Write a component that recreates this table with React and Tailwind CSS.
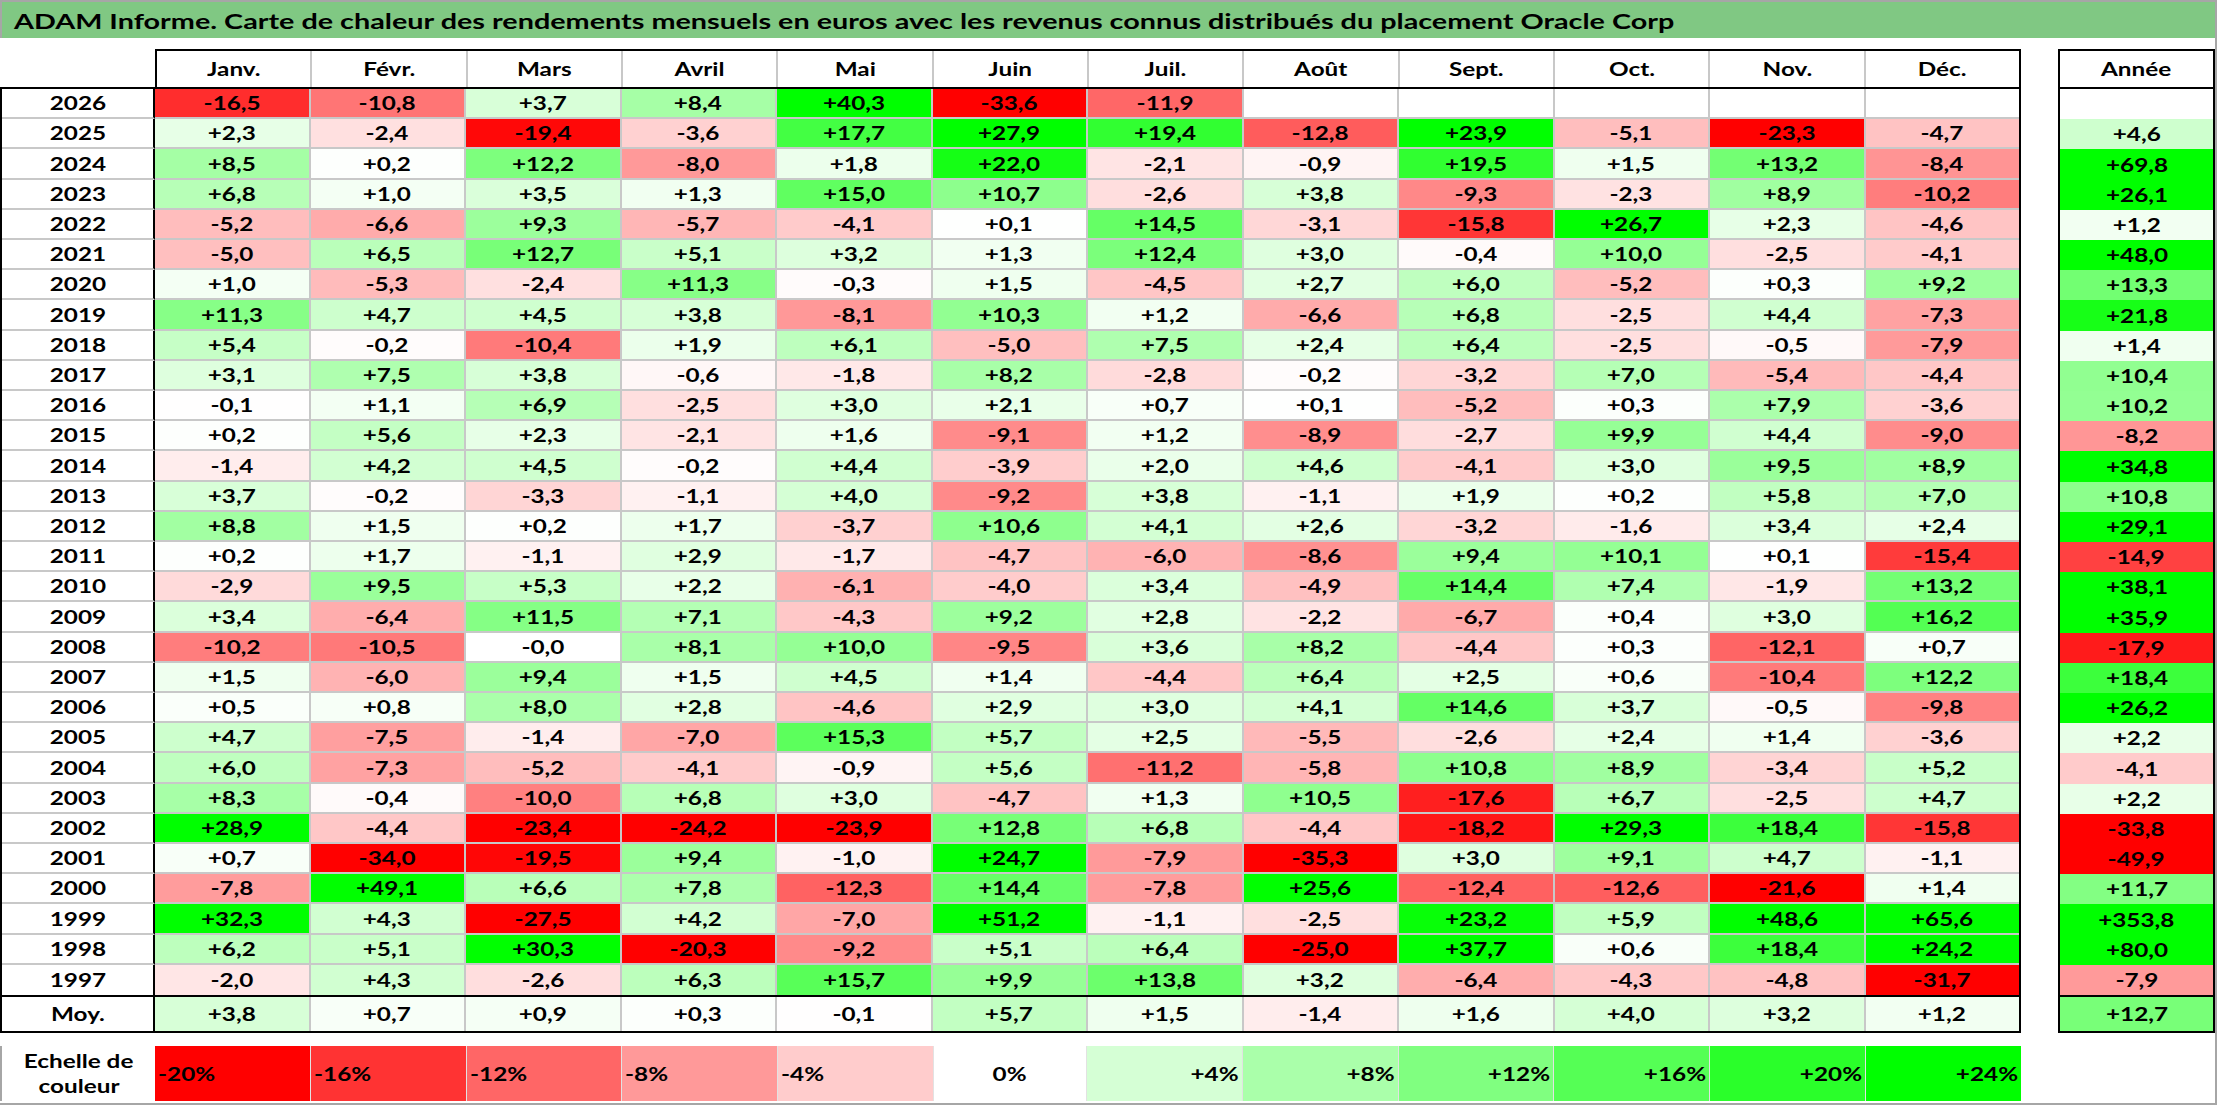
import React from "react";

const months = ["Janv.", "Févr.", "Mars", "Avril", "Mai", "Juin", "Juil.", "Août", "Sept.", "Oct.", "Nov.", "Déc."];

const raw = [
  ["2026", "-16,5 -10,8 +3,7 +8,4 +40,3 -33,6 -11,9 _ _ _ _ _", "_"],
  ["2025", "+2,3 -2,4 -19,4 -3,6 +17,7 +27,9 +19,4 -12,8 +23,9 -5,1 -23,3 -4,7", "+4,6"],
  ["2024", "+8,5 +0,2 +12,2 -8,0 +1,8 +22,0 -2,1 -0,9 +19,5 +1,5 +13,2 -8,4", "+69,8"],
  ["2023", "+6,8 +1,0 +3,5 +1,3 +15,0 +10,7 -2,6 +3,8 -9,3 -2,3 +8,9 -10,2", "+26,1"],
  ["2022", "-5,2 -6,6 +9,3 -5,7 -4,1 +0,1 +14,5 -3,1 -15,8 +26,7 +2,3 -4,6", "+1,2"],
  ["2021", "-5,0 +6,5 +12,7 +5,1 +3,2 +1,3 +12,4 +3,0 -0,4 +10,0 -2,5 -4,1", "+48,0"],
  ["2020", "+1,0 -5,3 -2,4 +11,3 -0,3 +1,5 -4,5 +2,7 +6,0 -5,2 +0,3 +9,2", "+13,3"],
  ["2019", "+11,3 +4,7 +4,5 +3,8 -8,1 +10,3 +1,2 -6,6 +6,8 -2,5 +4,4 -7,3", "+21,8"],
  ["2018", "+5,4 -0,2 -10,4 +1,9 +6,1 -5,0 +7,5 +2,4 +6,4 -2,5 -0,5 -7,9", "+1,4"],
  ["2017", "+3,1 +7,5 +3,8 -0,6 -1,8 +8,2 -2,8 -0,2 -3,2 +7,0 -5,4 -4,4", "+10,4"],
  ["2016", "-0,1 +1,1 +6,9 -2,5 +3,0 +2,1 +0,7 +0,1 -5,2 +0,3 +7,9 -3,6", "+10,2"],
  ["2015", "+0,2 +5,6 +2,3 -2,1 +1,6 -9,1 +1,2 -8,9 -2,7 +9,9 +4,4 -9,0", "-8,2"],
  ["2014", "-1,4 +4,2 +4,5 -0,2 +4,4 -3,9 +2,0 +4,6 -4,1 +3,0 +9,5 +8,9", "+34,8"],
  ["2013", "+3,7 -0,2 -3,3 -1,1 +4,0 -9,2 +3,8 -1,1 +1,9 +0,2 +5,8 +7,0", "+10,8"],
  ["2012", "+8,8 +1,5 +0,2 +1,7 -3,7 +10,6 +4,1 +2,6 -3,2 -1,6 +3,4 +2,4", "+29,1"],
  ["2011", "+0,2 +1,7 -1,1 +2,9 -1,7 -4,7 -6,0 -8,6 +9,4 +10,1 +0,1 -15,4", "-14,9"],
  ["2010", "-2,9 +9,5 +5,3 +2,2 -6,1 -4,0 +3,4 -4,9 +14,4 +7,4 -1,9 +13,2", "+38,1"],
  ["2009", "+3,4 -6,4 +11,5 +7,1 -4,3 +9,2 +2,8 -2,2 -6,7 +0,4 +3,0 +16,2", "+35,9"],
  ["2008", "-10,2 -10,5 -0,0 +8,1 +10,0 -9,5 +3,6 +8,2 -4,4 +0,3 -12,1 +0,7", "-17,9"],
  ["2007", "+1,5 -6,0 +9,4 +1,5 +4,5 +1,4 -4,4 +6,4 +2,5 +0,6 -10,4 +12,2", "+18,4"],
  ["2006", "+0,5 +0,8 +8,0 +2,8 -4,6 +2,9 +3,0 +4,1 +14,6 +3,7 -0,5 -9,8", "+26,2"],
  ["2005", "+4,7 -7,5 -1,4 -7,0 +15,3 +5,7 +2,5 -5,5 -2,6 +2,4 +1,4 -3,6", "+2,2"],
  ["2004", "+6,0 -7,3 -5,2 -4,1 -0,9 +5,6 -11,2 -5,8 +10,8 +8,9 -3,4 +5,2", "-4,1"],
  ["2003", "+8,3 -0,4 -10,0 +6,8 +3,0 -4,7 +1,3 +10,5 -17,6 +6,7 -2,5 +4,7", "+2,2"],
  ["2002", "+28,9 -4,4 -23,4 -24,2 -23,9 +12,8 +6,8 -4,4 -18,2 +29,3 +18,4 -15,8", "-33,8"],
  ["2001", "+0,7 -34,0 -19,5 +9,4 -1,0 +24,7 -7,9 -35,3 +3,0 +9,1 +4,7 -1,1", "-49,9"],
  ["2000", "-7,8 +49,1 +6,6 +7,8 -12,3 +14,4 -7,8 +25,6 -12,4 -12,6 -21,6 +1,4", "+11,7"],
  ["1999", "+32,3 +4,3 -27,5 +4,2 -7,0 +51,2 -1,1 -2,5 +23,2 +5,9 +48,6 +65,6", "+353,8"],
  ["1998", "+6,2 +5,1 +30,3 -20,3 -9,2 +5,1 +6,4 -25,0 +37,7 +0,6 +18,4 +24,2", "+80,0"],
  ["1997", "-2,0 +4,3 -2,6 +6,3 +15,7 +9,9 +13,8 +3,2 -6,4 -4,3 -4,8 -31,7", "-7,9"],
];

const moy = "+3,8 +0,7 +0,9 +0,3 -0,1 +5,7 +1,5 -1,4 +1,6 +4,0 +3,2 +1,2".split(" ");
const moyYear = "+12,7";

const rows = raw.map(([y, m, a]) => ({
  year: y,
  months: m.split(" ").map((s) => (s === "_" ? "" : s)),
  annee: a === "_" ? "" : a,
}));

function colorOf(s) {
  if (s === "" || s == null) return "#ffffff";
  const v = parseFloat(String(s).replace(",", ".").replace("%", ""));
  if (!v) return "#ffffff";
  if (v < 0) {
    const t = Math.min(-v / 20, 1);
    const c = Math.round(255 * (1 - t));
    return `rgb(255,${c},${c})`;
  }
  const t = Math.min(v / 24, 1);
  const c = Math.round(255 * (1 - t));
  return `rgb(${c},255,${c})`;
}

function T({ children, origin = "origin-center" }) {
  return <span className={`inline-block scale-x-[1.35] ${origin}`}>{children}</span>;
}

const legend = ["-20%", "-16%", "-12%", "-8%", "-4%", "0%", "+4%", "+8%", "+12%", "+16%", "+20%", "+24%"];

export default function App() {
  return (
    <div className="w-[2217px] h-[1105px] bg-white border-t-2 border-r-2 border-b-2 border-[#a6a6a6] font-[Lato,sans-serif] font-bold text-black text-[18px] leading-none overflow-hidden">
      {/* Title */}
      <div className="h-[36px] bg-[#80c883] border-l-2 border-[#a6a6a6] flex items-center pl-[12px] text-[21px]">
        <span className="inline-block scale-x-[1.37] origin-left whitespace-nowrap">
          ADAM Informe. Carte de chaleur des rendements mensuels en euros avec les revenus connus distribués du placement Oracle Corp
        </span>
      </div>

      <div className="mt-[11px] flex">
        {/* Main table */}
        <div className="w-[2021px] flex flex-col">
          <div className="flex h-[38px]">
            <div className="w-[155px]" />
            <div className="flex-1 flex border-t-2 border-x-2 border-black">
              {months.map((m, i) => (
                <div
                  key={m}
                  className={`flex-1 flex items-center justify-center ${i < 11 ? "border-r-2 border-[#c8c8c8]" : ""}`}
                >
                  <T>{m}</T>
                </div>
              ))}
            </div>
          </div>

          <div className="h-[908px] flex flex-col border-t-2 border-x-2 border-black">
            {rows.map((r, ri) => (
              <div key={r.year} className="flex-1 min-h-0 flex">
                <div
                  className={`w-[153px] flex items-center justify-center border-r-2 border-r-black ${
                    ri < rows.length - 1 ? "border-b-2 border-b-[#c8c8c8]" : ""
                  }`}
                >
                  <T>{r.year}</T>
                </div>
                {r.months.map((v, i) => (
                  <div
                    key={i}
                    className={`flex-1 flex items-center justify-center border-[#c8c8c8] ${i < 11 ? "border-r-2" : ""} ${
                      ri < rows.length - 1 ? "border-b-2" : ""
                    }`}
                    style={{ backgroundColor: colorOf(v) }}
                  >
                    <T>{v}</T>
                  </div>
                ))}
              </div>
            ))}
          </div>

          <div className="h-[38px] flex border-2 border-black">
            <div className="w-[153px] flex items-center justify-center border-r-2 border-black">
              <T>Moy.</T>
            </div>
            {moy.map((v, i) => (
              <div
                key={i}
                className={`flex-1 flex items-center justify-center border-[#c8c8c8] ${i < 11 ? "border-r-2" : ""}`}
                style={{ backgroundColor: colorOf(v) }}
              >
                <T>{v}</T>
              </div>
            ))}
          </div>
        </div>

        {/* Année */}
        <div className="ml-[37px] w-[157px] flex flex-col">
          <div className="h-[38px] flex items-center justify-center border-t-2 border-x-2 border-black">
            <T>Année</T>
          </div>
          <div className="h-[908px] flex flex-col border-t-2 border-x-2 border-black">
            {rows.map((r) => (
              <div
                key={r.year}
                className="flex-1 min-h-0 flex items-center justify-center"
                style={{ backgroundColor: colorOf(r.annee) }}
              >
                <T>{r.annee}</T>
              </div>
            ))}
          </div>
          <div
            className="h-[38px] flex items-center justify-center border-2 border-black"
            style={{ backgroundColor: colorOf(moyYear) }}
          >
            <T>{moyYear}</T>
          </div>
        </div>
      </div>

      {/* Legend */}
      <div className="mt-[13px] flex h-[55px]">
        <div className="w-[155px] border-l-2 border-[#a6a6a6] flex flex-col items-center justify-center leading-[25px]">
          <T>Echelle de</T>
          <T>couleur</T>
        </div>
        <div className="w-[1866px] flex">
          {legend.map((l, i) => {
            const v = parseFloat(l);
            const align = v < 0 ? "justify-start pl-[3px]" : v > 0 ? "justify-end pr-[3px]" : "justify-center";
            const origin = v < 0 ? "origin-left" : v > 0 ? "origin-right" : "origin-center";
            return (
              <div
                key={l}
                className={`flex-1 flex items-center ${align} ${i < 11 ? "border-r border-[#e2e2e2]" : ""}`}
                style={{ backgroundColor: colorOf(l) }}
              >
                <T origin={origin}>{l}</T>
              </div>
            );
          })}
        </div>
      </div>
    </div>
  );
}
